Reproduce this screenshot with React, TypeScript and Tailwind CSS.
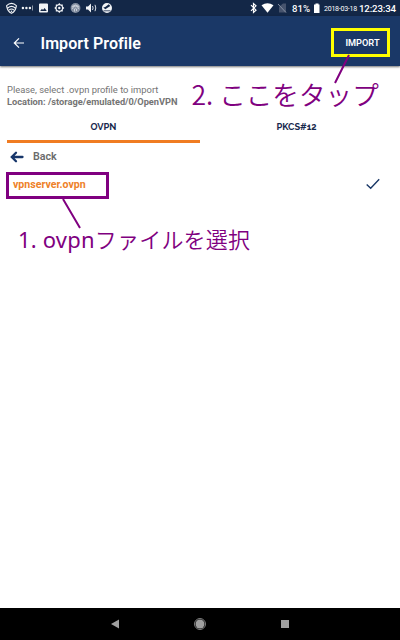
import React from 'react';

function StatusIcons() {
  return (
    <svg width="120" height="16" viewBox="0 0 120 16" fill="none">
      <path d="M6.300 5.800Q11.500 1 16.700 5.800M7.800 8Q11.500 4.800 15.200 8M9.200 10Q11.500 8 13.800 10M6.600 5.800Q7.500 11.500 11.500 13.300Q15.500 11.500 16.400 5.800" stroke="#f2f4f7" strokeWidth="1.100" />
      <g fill="#f2f4f7">
        <circle cx="11.500" cy="11.200" r=".8" />
        <circle cx="22.900" cy="8" r="1.200" />
        <circle cx="26.400" cy="8" r="1.200" />
        <circle cx="29.900" cy="8" r="1.200" />
        <path d="M32 5.500h.8v5H32z" opacity=".7" />
        <path fillRule="evenodd" d="M40 3.500h7q1 0 1 1v7q0 1-1 1h-7q-1 0-1-1v-7q0-1 1-1ZM40.200 11h6.600l-2.200-3-1.600 2-1-1.200Z" />
        <path fillRule="evenodd" d="M59.300 3l1.400 1.500h2.100v2.100L64.300 8l-1.500 1.400v2.100h-2.100L59.300 13l-1.400-1.500h-2.100V9.400L54.300 8l1.500-1.400V4.500h2.100ZM59.300 5.300a2.700 2.700 0 1 0 0 5.400 2.700 2.700 0 0 0 0-5.400Z" />
        <circle cx="59.300" cy="8" r="1.200" />
        <circle cx="75.500" cy="8" r="4.900" fill="#8590a2" />
        <path d="M86 6.500h2L91 3.500v9l-3-3h-2Z" />
        <path fillRule="evenodd" d="M107 3a5 5 0 1 1 0 10 5 5 0 0 1 0-10ZM103.300 7.500l2 1.800 5-3.300-1.500-1.700-3.600 2.600Z" />
      </g>
      <g stroke="#dbe0e8">
        <path d="M72 6.500q3.500-3 7 0M72.500 9q0-3 3-3t3 3M74.500 11.500V9q1-1.500 2 0v2" stroke="#e8ebf0" strokeWidth=".7" />
        <path d="M92.500 6q1.300 2 0 4M95 4.800q1.600 3.200 0 6.400" />
        <path d="M103.500 10.800h7" stroke="#132747" strokeWidth=".8" />
      </g>
    </svg>
  );
}

function SignalIcons() {
  return (
    <svg width="46" height="16" viewBox="246 0 46 16" fill="none" className="ml-auto">
      <path d="M251 5.200l5 5-2.500 2.300v-9L256 5.800l-5 5" stroke="#fff" strokeWidth="1.200" />
      <path d="M261.500 5.200Q267.500 1.200 273.500 5.200L267.500 12.700Z" fill="#fff" />
      <path d="M280 6l3-2.500h3v9h-7V7Z" fill="#46536d" />
      <path d="M278 4l8 8.500" stroke="#8690a3" strokeWidth="1" />
    </svg>
  );
}

export default function App() {
  return (
    <div className="relative flex h-[640px] w-[400px] flex-col overflow-hidden bg-white font-['Roboto','Noto_Sans_CJK_JP',sans-serif]">
      <div className="flex h-4 shrink-0 items-center bg-[#132747] text-white">
        <StatusIcons />
        <SignalIcons />
        <span className="w-[22px] whitespace-nowrap pt-px text-[9.600px] font-medium leading-4">81%</span>
        <svg width="6" height="16" viewBox="0 0 6 16"><path d="M1.500 3.500h3v1H5.500v8.500H0V4.500h1.500Z" fill="#fff" /></svg>
        <span className="ml-[4px] w-[35px] whitespace-nowrap pt-[3px] text-[7px] leading-[13px] tracking-[-0.240px]">2018-03-18</span>
        <span className="mr-[3px] w-[38px] whitespace-nowrap pt-px text-[9.700px] font-medium leading-4 tracking-[-0.160px]">12:23:34</span>
      </div>

      <header className="flex h-[50px] shrink-0 items-center bg-[#1a3867] pt-[3px] text-white shadow-[0_1px_2px_rgba(0,0,0,0.55)]">
        <svg width="12" height="12" viewBox="0 0 12 12" fill="none" className="ml-[13px] mt-px" stroke="#fff" strokeWidth="1.200">
          <path d="M11 6H1.500M6 1.300L1.300 6 6 10.700" />
        </svg>
        <h1 className="ml-[15.500px] mt-[2px] text-[16px] font-semibold leading-5 tracking-[0.060px]">Import Profile</h1>
        <div className="ml-auto mr-[10px] mt-[-1px] flex h-[29px] w-[59px] items-center justify-center border-[3px] border-[#ffff00] pl-[4px] pt-[2px] text-[9.200px] font-semibold">IMPORT</div>
      </header>

      <main className="flex flex-1 flex-col">
        <div className="px-[7px] pt-[18px] text-[9.380px] leading-[12px] text-[#747474]">
          <p className="h-3">Please, select .ovpn profile to import</p>
          <p className="h-3 text-[9.260px] font-bold">Location: /storage/emulated/0/OpenVPN</p>
        </div>
        <div className="mx-[7px] grid h-[35px] shrink-0 grid-cols-2 font-['Raleway','Lato',sans-serif] text-[9.300px] font-bold text-[#18294d]">
          <div className="border-b-[3px] border-[#f07c22] pt-[12px] text-center leading-[14px]">OVPN</div>
          <div className="pt-[12px] text-center leading-[14px]">PKCS#12</div>
        </div>
        <div className="flex h-[28px] shrink-0 items-center gap-[9px] pl-[10px] text-[10.700px] font-semibold text-[#6b6b6b]">
          <svg width="14" height="12" viewBox="0 0 14 12" fill="none" stroke="#17366a" strokeWidth="2.300" strokeLinecap="round">
            <path d="M12.500 6H2M6 1.800L1.800 6l4.200 4.200" />
          </svg>
          <span>Back</span>
        </div>
        <div className="flex h-[28px] shrink-0 items-center pl-[6px] pr-[20px]">
          <div className="mt-px flex h-[27px] w-[103px] items-center border-[3px] border-[#800080] pb-[2px] pl-[4px] text-[10.600px] font-bold text-[#ee8129]">vpnserver.ovpn</div>
          <svg width="14" height="12" viewBox="0 0 14 12" fill="none" stroke="#1a3867" strokeWidth="1.400" className="ml-auto mt-[-3px]">
            <path d="M.700 6.500L4.700 10.300 13.200 1.300" />
          </svg>
        </div>
      </main>

      <nav className="flex h-8 shrink-0 items-center bg-black">
        <svg width="8" height="10" viewBox="0 0 8 10" className="ml-[110.500px]"><path d="M8 .5v9L0 5Z" fill="#a0a0a0" /></svg>
        <svg width="12" height="12" viewBox="0 0 12 12" className="ml-[75.500px]">
          <circle cx="6" cy="6" r="5.500" fill="none" stroke="#a0a0a0" strokeWidth=".8" />
          <circle cx="6" cy="6" r="4.500" fill="#a0a0a0" />
        </svg>
        <div className="ml-[75px] h-2 w-2 bg-[#a0a0a0]" />
      </nav>

      <svg width="400" height="640" viewBox="0 0 400 640" className="pointer-events-none absolute inset-0" stroke="#800080" strokeWidth="2">
        <path d="M349 55L335 83M63 199L80 228" />
      </svg>
      <div className="absolute left-[191.500px] top-[76px] whitespace-nowrap font-['Noto_Sans_CJK_JP',sans-serif] text-[26.600px] font-[350] leading-9 text-[#800080]">2. ここをタップ</div>
      <div className="absolute left-[18px] top-[222px] whitespace-nowrap font-['Noto_Sans','Noto_Sans_CJK_JP',sans-serif] text-[22px] leading-8 tracking-[0.200px] text-[#800080]">1. ovpn<span className="font-['Noto_Sans_CJK_JP',sans-serif] font-[350]">ファイルを選択</span></div>
    </div>
  );
}
